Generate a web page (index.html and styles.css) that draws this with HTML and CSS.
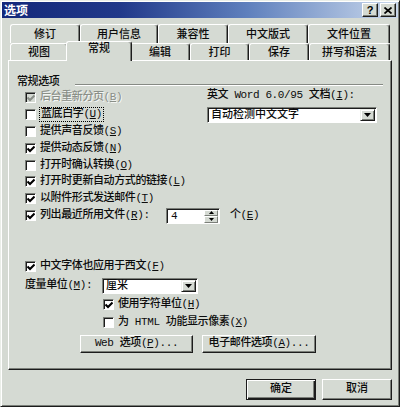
FILE: index.html
```html
<!DOCTYPE html>
<html lang="zh-CN">
<head>
<meta charset="utf-8">
<title>选项</title>
<link rel="stylesheet" href="styles.css">
</head>
<body>
<div class="window">
  <div class="titlebar">
    <span class="title">选项</span>
    <div class="tbtns">
      <span class="tbtn">?</span>
      <span class="tbtn"><svg width="8" height="7" viewBox="0 0 8 7"><path d="M0.5 0.5 L7.5 6.5 M7.5 0.5 L0.5 6.5" stroke="#000" stroke-width="1.7"/></svg></span>
    </div>
  </div>

  <div class="tabs">
    <div class="tabrow back">
      <div class="tab w70">修订</div>
      <div class="tab w78">用户信息</div>
      <div class="tab w70">兼容性</div>
      <div class="tab w80">中文版式</div>
      <div class="tab w82">文件位置</div>
    </div>
    <div class="tabrow front">
      <div class="tab w58">视图</div>
      <div class="tab sel">常规</div>
      <div class="tab w60">编辑</div>
      <div class="tab w59">打印</div>
      <div class="tab w60">保存</div>
      <div class="tab w81">拼写和语法</div>
    </div>
  </div>

  <div class="panel">
    <div class="ghead">
      <span class="glabel">常规选项</span>
      <span class="gline"></span>
    </div>

    <div class="top">
      <div class="left">
        <div class="row disabled"><span class="cb off-gray"><svg width="8" height="8" viewBox="0 0 8 8"><polyline points="0.5,3.5 3,6 7.5,1.5" fill="none" stroke="#8a8f88" stroke-width="2"/></svg></span><span>后台重新分页(<u>B</u>)</span></div>
        <div class="row"><span class="cb"></span><span class="focus">蓝底白字(<u>U</u>)</span></div>
        <div class="row"><span class="cb"></span><span>提供声音反馈(<u>S</u>)</span></div>
        <div class="row"><span class="cb"><svg width="8" height="8" viewBox="0 0 8 8"><polyline points="0.5,3.5 3,6 7.5,1.5" fill="none" stroke="#000" stroke-width="2"/></svg></span><span>提供动态反馈(<u>N</u>)</span></div>
        <div class="row"><span class="cb"></span><span>打开时确认转换(<u>O</u>)</span></div>
        <div class="row"><span class="cb"><svg width="8" height="8" viewBox="0 0 8 8"><polyline points="0.5,3.5 3,6 7.5,1.5" fill="none" stroke="#000" stroke-width="2"/></svg></span><span>打开时更新自动方式的链接(<u>L</u>)</span></div>
        <div class="row"><span class="cb"><svg width="8" height="8" viewBox="0 0 8 8"><polyline points="0.5,3.5 3,6 7.5,1.5" fill="none" stroke="#000" stroke-width="2"/></svg></span><span>以附件形式发送邮件(<u>T</u>)</span></div>
        <div class="row"><span class="cb"><svg width="8" height="8" viewBox="0 0 8 8"><polyline points="0.5,3.5 3,6 7.5,1.5" fill="none" stroke="#000" stroke-width="2"/></svg></span><span class="rlabel">列出最近所用文件(<u>R</u>):</span>
          <span class="spin"><span class="spinval">4</span><span class="spinbtns"><span class="sbtn"><svg width="5" height="3" viewBox="0 0 5 3"><polygon points="2.5,0 5,3 0,3" fill="#000"/></svg></span><span class="sbtn"><svg width="5" height="3" viewBox="0 0 5 3"><polygon points="0,0 5,0 2.5,3" fill="#000"/></svg></span></span></span>
          <span class="unit">个(<u>E</u>)</span>
        </div>
      </div>
      <div class="right">
        <div class="wlabel">英文 Word 6.0/95 文档(<u>I</u>):</div>
        <div class="select wide"><span class="val">自动检测中文文字</span><span class="arrow"><svg width="7" height="4" viewBox="0 0 7 4"><polygon points="0,0 7,0 3.5,4" fill="#000"/></svg></span></div>
      </div>
    </div>

    <div class="row cjkrow"><span class="cb"><svg width="8" height="8" viewBox="0 0 8 8"><polyline points="0.5,3.5 3,6 7.5,1.5" fill="none" stroke="#000" stroke-width="2"/></svg></span><span>中文字体也应用于西文(<u>F</u>)</span></div>

    <div class="measure">
      <span class="mlabel">度量单位(<u>M</u>):</span>
      <div class="select small"><span class="val">厘米</span><span class="arrow"><svg width="7" height="4" viewBox="0 0 7 4"><polygon points="0,0 7,0 3.5,4" fill="#000"/></svg></span></div>
    </div>

    <div class="sub">
      <div class="row"><span class="cb"><svg width="8" height="8" viewBox="0 0 8 8"><polyline points="0.5,3.5 3,6 7.5,1.5" fill="none" stroke="#000" stroke-width="2"/></svg></span><span>使用字符单位(<u>H</u>)</span></div>
      <div class="row second"><span class="cb"></span><span>为 HTML 功能显示像素(<u>X</u>)</span></div>
    </div>

    <div class="btnrow">
      <div class="btn web">Web 选项(<u>P</u>)...</div>
      <div class="btn mail">电子邮件选项(<u>A</u>)...</div>
    </div>
  </div>

  <div class="footer">
    <div class="btn fbtn default">确定</div>
    <div class="btn fbtn">取消</div>
  </div>
</div>
</body>
</html>
```

FILE: styles.css
```css
* { box-sizing: border-box; margin: 0; padding: 0; }
html, body { width: 400px; height: 407px; overflow: hidden; }
body {
  background: #d5dad3;
  font-family: "Liberation Mono", "Noto Sans CJK SC", monospace;
  font-size: 11px;
  font-weight: 500;
  letter-spacing: -0.4px;
  line-height: 13px;
  color: #0c0c0c;
}
u { text-decoration: underline; text-underline-offset: 1px; }

.window {
  width: 400px; height: 407px;
  background: #d5dad3;
  border: 1px solid;
  border-color: #eaeee8 #1c1c1c #1c1c1c #eaeee8;
  box-shadow: inset 1px 1px 0 #fff, inset -1px -1px 0 #7b7f79;
  padding: 1px;
  display: flex; flex-direction: column;
}

.titlebar {
  height: 16px; flex: none;
  display: flex; align-items: center; justify-content: space-between;
  padding: 0 2px 0 2px;
  background: linear-gradient(90deg, #13287a 0%, #21398a 30%, #5f80bd 62%, #c9d8ec 100%);
}
.title {
  color: #fff; font-weight: bold; font-size: 12px; letter-spacing: 0;
  font-family: "Noto Sans CJK SC", sans-serif; line-height: 14px;
}
.tbtns { display: flex; gap: 2px; }
.tbtn {
  width: 16px; height: 14px;
  display: flex; align-items: center; justify-content: center;
  background: #d5dad3;
  border: 1px solid; border-color: #fff #1c1c1c #1c1c1c #fff;
  box-shadow: inset -1px -1px 0 #7b7f79;
  font-family: "Liberation Sans", sans-serif; font-weight: bold; font-size: 11px;
  letter-spacing: 0; color: #000; line-height: 11px;
}

.tabs { margin: 6px 0 0 8px; flex: none; letter-spacing: 0; }
.tabrow { display: flex; }
.back { height: 19px; }
.front { height: 17px; align-items: flex-end; }
.tab {
  flex: none; height: 100%; text-align: center;
  border-top: 1px solid #fff; border-left: 1px solid #fff;
  border-right: 1px solid #1c1c1c;
  box-shadow: inset -1px 0 0 #7b7f79;
  border-radius: 3px 3px 0 0;
  background: #d5dad3;
}
.back .tab { padding-top: 4px; }
.front .tab { padding-top: 3px; }
.front .tab.sel {
  width: 66px; height: 20px; margin: 0 -2px -1px;
  position: relative; z-index: 2; padding-top: 1px;
}
.w58 { width: 58px; } .w59 { width: 59px; } .w60 { width: 60px; }
.w70 { width: 70px; } .w78 { width: 78px; } .w80 { width: 80px; }
.w81 { width: 81px; } .w82 { width: 82px; }

.panel {
  margin-left: 6px; width: 384px; height: 310px; flex: none;
  border: 1px solid; border-color: #fff #1c1c1c #1c1c1c #fff;
  box-shadow: inset -1px -1px 0 #7b7f79;
  padding: 15px 8px 0 8px;
}

.ghead { display: flex; height: 12px; line-height: 12px; }
.glabel { width: 58px; flex: none; }
.gline {
  flex: 1; height: 2px; margin-top: 8px;
  border-top: 1px solid #868a84; border-bottom: 1px solid #fff;
}

.top { display: grid; grid-template-columns: 190px 1fr; margin-top: 1.6px; }
.left { padding-left: 8px; }
.row { height: 16.8px; display: flex; align-items: center; white-space: nowrap; }

.cb {
  width: 11px; height: 11px; flex: none; margin-right: 4px;
  background: #fff;
  border: 1px solid; border-color: #7b7f79 #fff #fff #7b7f79;
  box-shadow: inset 1px 1px 0 #1c1c1c;
  display: flex; align-items: center; justify-content: center;
  padding: 1px 0 0 1px;
}
.cb.off-gray { background: #d5dad3; }
.disabled { color: #8a8f88; text-shadow: 1px 1px 0 #f4f6f3; }
.focus { outline: 1px dotted #000; outline-offset: 0; padding: 0 1px; }

.rlabel { width: 126px; flex: none; }
.spin {
  width: 54px; height: 16px; flex: none; display: flex;
  background: #fff;
  border: 1px solid; border-color: #7b7f79 #fff #fff #7b7f79;
  box-shadow: inset 1px 1px 0 #1c1c1c;
  padding: 1px 1px 0 1px;
}
.spinval { flex: 1; padding-left: 3px; line-height: 13px; }
.spinbtns { width: 14px; display: flex; flex-direction: column; }
.sbtn {
  flex: 1; display: flex; align-items: center; justify-content: center;
  background: #d5dad3;
  border: 1px solid; border-color: #fff #7b7f79 #7b7f79 #fff;
}
.unit { margin-left: 10px; }

.right { padding-left: 0; }
.wlabel { margin-top: -1px; height: 13px; white-space: nowrap; }
.select {
  height: 16px; display: flex;
  background: #fff;
  border: 1px solid; border-color: #7b7f79 #fff #fff #7b7f79;
  box-shadow: inset 1px 1px 0 #1c1c1c;
  padding: 1px 1px 1px 1px;
}
.select.wide { width: 170px; margin-top: 5.4px; }
.select .val { flex: 1; padding-left: 2px; line-height: 12px; letter-spacing: 0; }
.arrow {
  width: 15px; flex: none;
  display: flex; align-items: center; justify-content: center;
  background: #d5dad3;
  border: 1px solid; border-color: #eef1ec #1c1c1c #1c1c1c #eef1ec;
  box-shadow: inset 1px 1px 0 #fff, inset -1px -1px 0 #7b7f79;
}

.cjkrow { padding-left: 8px; margin-top: 34.6px; }
.measure { display: flex; align-items: center; height: 17px; margin-top: 2.1px; padding-left: 8px; }
.mlabel { width: 77px; flex: none; }
.select.small { width: 96px; }

.sub { padding-left: 86px; margin-top: 2.1px; }
.sub .second { margin-top: 1.2px; }

.btnrow { display: flex; gap: 9px; margin: 3.6px 0 0 63px; }
.btn {
  height: 18px; display: flex; align-items: center; justify-content: center;
  background: #d5dad3;
  border: 1px solid; border-color: #fff #1c1c1c #1c1c1c #fff;
  box-shadow: inset -1px -1px 0 #7b7f79;
  white-space: nowrap;
}
.web { width: 113px; }
.mail { width: 114px; }

.footer {
  flex: none; display: flex; justify-content: flex-end; gap: 6px;
  margin-top: 9px; padding-right: 6px;
}
.fbtn { width: 70px; height: 21px; letter-spacing: 0; }
.fbtn.default {
  border-color: #1c1c1c;
  box-shadow: inset 1px 1px 0 #fff, inset -1px -1px 0 #1c1c1c, inset -2px -2px 0 #7b7f79;
}
```
